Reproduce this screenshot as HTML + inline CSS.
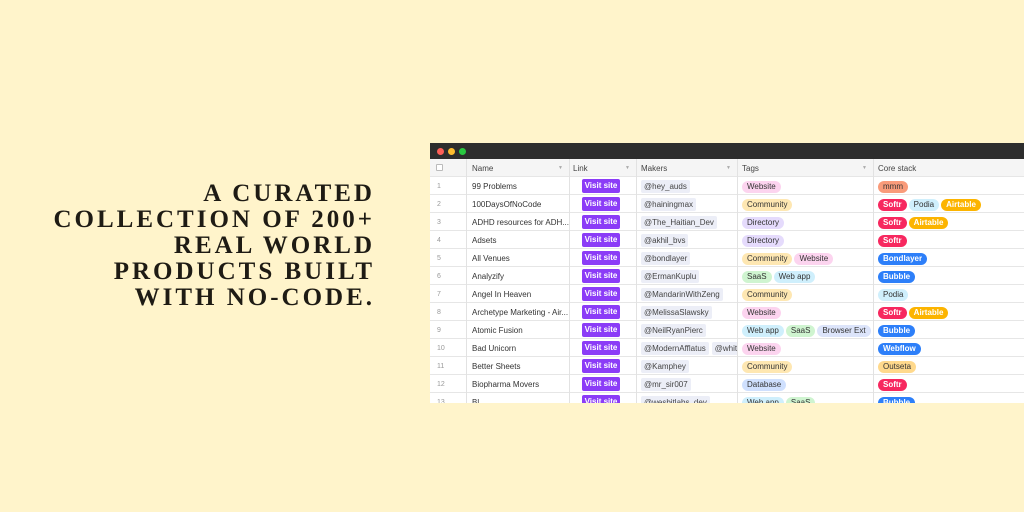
<!DOCTYPE html>
<html><head><meta charset="utf-8"><style>
*{margin:0;padding:0;box-sizing:border-box}
body{width:1024px;height:512px;background:#fff4cb;position:relative;overflow:hidden;font-family:"Liberation Sans",Arial,sans-serif}
.h{position:absolute;right:649px;top:181px;text-align:right;font-family:"Liberation Serif",serif;font-weight:bold;font-size:25px;line-height:26px;letter-spacing:3px;color:#1e1b14;white-space:nowrap}
.win{position:absolute;left:430px;top:143px;width:594px;height:260px;background:#fff;overflow:hidden}
.tb{height:16px;background:#2d2d2d;position:relative}
.dot{position:absolute;top:5px;width:7px;height:7px;border-radius:50%}
.row{position:absolute;left:0;width:594px;height:18px;border-bottom:1px solid #e6e6e6;font-size:8px;color:#333}
.hd{background:#f5f5f5;color:#444;font-size:8px}
.c{position:absolute;top:0;height:18px;line-height:19px;white-space:nowrap;overflow:hidden}
.b{border-right:1px solid #e2e2e2}
.num{left:0;width:37px;padding-left:7px;color:#999;font-size:7px}
.nm{left:37px;width:103px;padding-left:5px}
.lk{left:140px;width:67px}
.mk{left:207px;width:101px;padding-left:4px}
.tg{left:308px;width:136px;padding-left:4px}
.cs{left:444px;width:150px;padding-left:4px}
.vs{position:absolute;left:12px;top:2px;width:38px;height:14px;background:#8b3cf7;color:#fff;border-radius:2px;font-weight:bold;font-size:8px;line-height:14px;text-align:center}
.m{display:inline-block;background:#eceef7;color:#444;padding:0 3px;height:13px;line-height:13px;border-radius:2px;margin-top:2px;margin-right:3px}
.p{display:inline-block;padding:0 5px;height:12px;line-height:12px;border-radius:6px;margin-top:3px;margin-right:2px;color:#333}
.w{color:#fff;font-weight:bold}
.arr{position:absolute;right:6px;top:0;color:#aaa;font-size:5px}
</style></head><body>
<div class="h">A CURATED<br>COLLECTION OF 200+<br>REAL WORLD<br>PRODUCTS BUILT<br>WITH NO-CODE.</div>
<div class="win">
<div class="tb"><div class="dot" style="left:7px;background:#fe5f57"></div><div class="dot" style="left:18px;background:#febc2e"></div><div class="dot" style="left:29px;background:#28c840"></div></div>
<div class="row hd" style="top:16px">
<div class="c num b" style="padding-left:6px"><span style="display:inline-block;width:7px;height:7px;border:1px solid #bbb;border-radius:1px;margin-top:5px;background:#fff"></span></div>
<div class="c nm b">Name<span class="arr">▼</span></div>
<div class="c lk b" style="padding-left:3px">Link<span class="arr">▼</span></div>
<div class="c mk b">Makers<span class="arr">▼</span></div>
<div class="c tg b">Tags<span class="arr">▼</span></div>
<div class="c cs">Core stack</div>
</div>
<div id="rows"></div>
</div>
<script>
var W='background:#fcd4ef',C='background:#fee7b2',D='background:#e5dbfc',S='background:#cff4d0',WA='background:#cfeffc',BE='background:#dce4fa',DB='background:#cfe0fe';
var SO='background:#f7285f" class="p w',PO='background:#cfeffc',AI='background:#fcb400" class="p w',BL='background:#2d7ff9" class="p w',MM='background:#f99b7a';
var data=[
["99 Problems",["@hey_auds"],[["Website",W]],[["mmm",MM]]],
["100DaysOfNoCode",["@hainingmax"],[["Community",C]],[["Softr",SO],["Podia",PO],["Airtable",AI]]],
["ADHD resources for ADH...",["@The_Haitian_Dev"],[["Directory",D]],[["Softr",SO],["Airtable",AI]]],
["Adsets",["@akhil_bvs"],[["Directory",D]],[["Softr",SO]]],
["All Venues",["@bondlayer"],[["Community",C],["Website",W]],[["Bondlayer",BL]]],
["Analyzify",["@ErmanKuplu"],[["SaaS",S],["Web app",WA]],[["Bubble",BL]]],
["Angel In Heaven",["@MandarinWithZeng"],[["Community",C]],[["Podia",PO]]],
["Archetype Marketing - Air...",["@MelissaSlawsky"],[["Website",W]],[["Softr",SO],["Airtable",AI]]],
["Atomic Fusion",["@NeilRyanPierc"],[["Web app",WA],["SaaS",S],["Browser Ext",BE]],[["Bubble",BL]]],
["Bad Unicorn",["@ModernAfflatus","@whit4th"],[["Website",W]],[["Webflow",BL]]],
["Better Sheets",["@Kamphey"],[["Community",C]],[["Outseta","background:#ffd98c"]]],
["Biopharma Movers",["@mr_sir007"],[["Database",DB]],[["Softr",SO]]],
["Bl...",["@wesbitlabs_dev"],[["Web app",WA],["SaaS",S]],[["Bubble",BL]]]];
var h='';
data.forEach(function(r,i){
h+='<div class="row" style="top:'+(34+i*18)+'px"><div class="c num b">'+(i+1)+'</div><div class="c nm b">'+r[0]+'</div><div class="c lk b"><div class="vs">Visit site</div></div><div class="c mk b">'+r[1].map(function(m){return '<span class="m">'+m+'</span>'}).join('')+'</div><div class="c tg b">'+r[2].map(function(t){return '<span class="p" style="'+t[1]+'">'+t[0]+'</span>'}).join('')+'</div><div class="c cs">'+r[3].map(function(t){return t[1].indexOf('class=')>0?'<span style="'+t[1]+'">'+t[0]+'</span>':'<span class="p" style="'+t[1]+'">'+t[0]+'</span>'}).join('')+'</div></div>';
});
document.getElementById('rows').innerHTML=h;
</script>
</body></html>
